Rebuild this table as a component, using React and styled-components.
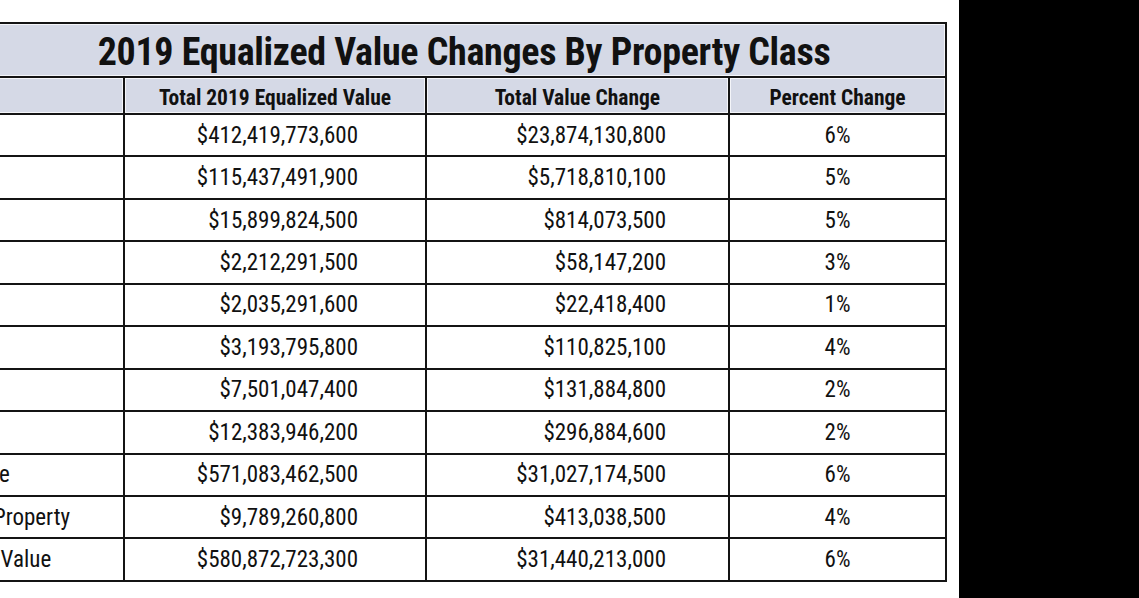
import React from 'react';
import styled, { createGlobalStyle } from 'styled-components';

const GlobalStyle = createGlobalStyle`
  html, body {
    margin: 0;
    padding: 0;
    background: #ffffff;
    overflow: hidden;
  }
  body {
    font-family: "Roboto Condensed", "Liberation Sans Narrow", "Roboto", "Liberation Sans", sans-serif;
    font-stretch: condensed;
    color: #111111;
  }
`;

const Page = styled.div`
  display: flex;
  width: 1139px;
  height: 598px;
  overflow: hidden;
`;

const Sheet = styled.div`
  width: 959px;
  flex: none;
  overflow: hidden;
  padding-top: 22px;
  background: #ffffff;
`;

const BlackPanel = styled.div`
  flex: 1;
  background: #000000;
`;

const Table = styled.table`
  margin-left: -145px;
  border-collapse: collapse;
  table-layout: fixed;
  width: 1090px;
`;

const TitleCell = styled.th`
  height: 49px;
  padding: 3px 0 0 126px;
  background: #d5d9e6;
  border: 2px solid #141414;
  box-shadow: inset 0 0 0 1px #f4f5f9;
  font-size: 38px;
  font-weight: 700;
  text-align: center;
  white-space: nowrap;
  letter-spacing: -0.3px;
`;

const HeadCell = styled.th`
  height: 32px;
  padding: 3px 0 0;
  background: #d5d9e6;
  border: 2px solid #141414;
  box-shadow: inset 0 0 0 1px #f4f5f9;
  font-size: 21.5px;
  font-weight: 700;
  text-align: ${(p) => p.$align || 'center'};
  white-space: nowrap;
  overflow: hidden;
`;

const Cell = styled.td`
  height: 40.45px;
  padding: 0 ${(p) => p.$padRight || 0}px 0 ${(p) => p.$padLeft || 0}px;
  border: 2px solid #141414;
  font-size: 23px;
  font-weight: 400;
  text-align: ${(p) => p.$align || 'left'};
  white-space: nowrap;
  overflow: hidden;
`;

const rows = [
  ['Residential', '$412,419,773,600', '$23,874,130,800', '6%'],
  ['Commercial', '$115,437,491,900', '$5,718,810,100', '5%'],
  ['Manufacturing', '$15,899,824,500', '$814,073,500', '5%'],
  ['Agricultural', '$2,212,291,500', '$58,147,200', '3%'],
  ['Undeveloped', '$2,035,291,600', '$22,418,400', '1%'],
  ['Ag Forest', '$3,193,795,800', '$110,825,100', '4%'],
  ['Forest', '$7,501,047,400', '$131,884,800', '2%'],
  ['Other', '$12,383,946,200', '$296,884,600', '2%'],
  ['Total Real Estate', '$571,083,462,500', '$31,027,174,500', '6%'],
  ['Total Personal Property', '$9,789,260,800', '$413,038,500', '4%'],
  ['Total Equalized Value', '$580,872,723,300', '$31,440,213,000', '6%'],
];

export default function App() {
  return (
    <>
      <GlobalStyle />
      <Page>
        <Sheet>
          <Table>
            <colgroup>
              <col style={{ width: 268 }} />
              <col style={{ width: 302 }} />
              <col style={{ width: 303 }} />
              <col style={{ width: 217 }} />
            </colgroup>
            <thead>
              <tr>
                <TitleCell colSpan={4}>2019 Equalized Value Changes By Property Class</TitleCell>
              </tr>
              <tr>
                <HeadCell $align="left">Class</HeadCell>
                <HeadCell>Total 2019 Equalized Value</HeadCell>
                <HeadCell>Total Value Change</HeadCell>
                <HeadCell>Percent Change</HeadCell>
              </tr>
            </thead>
            <tbody>
              {rows.map(([label, total, change, pct]) => (
                <tr key={label}>
                  <Cell>{label}</Cell>
                  <Cell $align="right" $padRight={67}>{total}</Cell>
                  <Cell $align="right" $padRight={62}>{change}</Cell>
                  <Cell $align="center">{pct}</Cell>
                </tr>
              ))}
            </tbody>
          </Table>
        </Sheet>
        <BlackPanel />
      </Page>
    </>
  );
}
